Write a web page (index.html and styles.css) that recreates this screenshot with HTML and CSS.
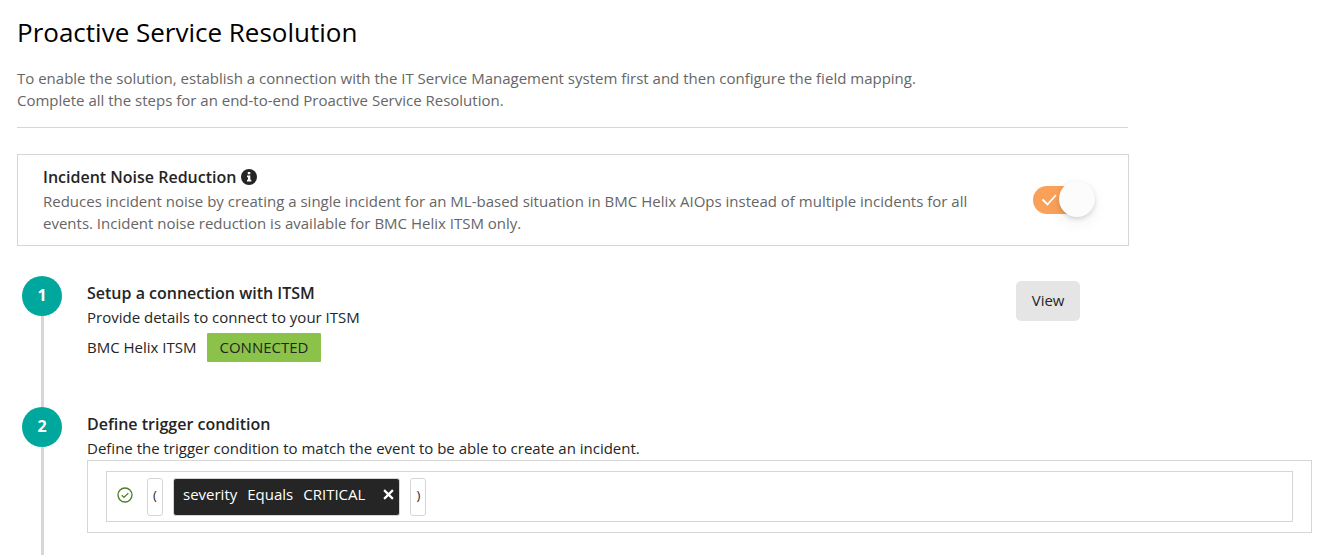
FILE: index.html
```html
<!DOCTYPE html>
<html lang="en">
<head>
    <meta charset="UTF-8">
    <meta name="viewport" content="width=device-width, initial-scale=1.0">
    <title>Proactive Service Resolution</title>
    <link rel="stylesheet" href="styles.css">
</head>
<body>
    <header class="page-header">
        <h1>Proactive Service Resolution</h1>
        <p>To enable the solution, establish a connection with the IT Service Management system first and then configure the field mapping.<br>
        Complete all the steps for an end-to-end Proactive Service Resolution.</p>
    </header>

    <section class="noise-box">
        <div class="noise-text">
            <h2>
                <label for="noise-toggle">Incident Noise Reduction</label>
                <svg class="info-icon" viewBox="0 0 16 16" aria-hidden="true">
                    <circle cx="8" cy="8" r="8" fill="#252525"/>
                    <path d="M6.8 3h2.5v2.2H6.8zM6 6.4h3.3v4.3h1v1.9H6v-1.9h1V8.2H6z" fill="#fff"/>
                </svg>
            </h2>
            <p>Reduces incident noise by creating a single incident for an ML-based situation in BMC Helix AIOps instead of multiple incidents for all events. Incident noise reduction is available for BMC Helix ITSM only.</p>
        </div>
        <div class="toggle">
            <input type="checkbox" id="noise-toggle" checked>
            <svg class="toggle-check" viewBox="0 0 16 12" aria-hidden="true">
                <path d="M1.5 5.5l5 5L15 1" fill="none" stroke="#fff" stroke-width="1.8"/>
            </svg>
            <span class="toggle-knob"></span>
        </div>
    </section>

    <ol class="steps">
        <li class="step">
            <div class="step-marker"><span class="step-number">1</span></div>
            <div class="step-body">
                <div class="step-main">
                    <div class="step-info">
                        <h2>Setup a connection with ITSM</h2>
                        <p>Provide details to connect to your ITSM</p>
                        <div class="connection">
                            <span>BMC Helix ITSM</span>
                            <span class="badge">CONNECTED</span>
                        </div>
                    </div>
                    <button type="button" class="view-button">View</button>
                </div>
            </div>
        </li>
        <li class="step">
            <div class="step-marker"><span class="step-number">2</span></div>
            <div class="step-body">
                <h2>Define trigger condition</h2>
                <p>Define the trigger condition to match the event to be able to create an incident.</p>
                <div class="condition-box">
                    <div class="condition">
                        <svg class="valid-icon" viewBox="0 0 16 16" aria-hidden="true">
                            <circle cx="8" cy="8" r="7" fill="none" stroke="#4f7d22" stroke-width="1.3"/>
                            <path d="M4.8 8.2l2.2 2.2 4.3-4.3" fill="none" stroke="#4f7d22" stroke-width="1.3"/>
                        </svg>
                        <span class="paren">(</span>
                        <span class="chip">
                            <span>severity</span>
                            <span>Equals</span>
                            <span>CRITICAL</span>
                            <button type="button" class="chip-remove" aria-label="Remove condition">
                                <svg viewBox="0 0 10 10" aria-hidden="true">
                                    <path d="M1 1l8 8M9 1L1 9" stroke="#fff" stroke-width="2"/>
                                </svg>
                            </button>
                        </span>
                        <span class="paren">)</span>
                    </div>
                </div>
            </div>
        </li>
    </ol>
</body>
</html>
```
FILE: styles.css
```css
* {
    box-sizing: border-box;
}
body {
    margin: 0;
    padding: 14px 12px 0 17px;
    font-family: "Open Sans", sans-serif;
    font-size: 15px;
    line-height: 22px;
    color: #252525;
    background: #fff;
}
h1, h2, p {
    margin: 0;
}
h1 {
    font-size: 26px;
    font-weight: 400;
    line-height: 36px;
    margin-bottom: 17px;
    color: #000;
}
h2 {
    font-size: 16px;
    font-weight: 600;
    line-height: 24px;
    margin-bottom: 1px;
}
.page-header {
    width: 85.8%;
    padding-bottom: 16px;
    border-bottom: 1px solid #d6d6d6;
    color: #666;
}
.noise-box {
    display: flex;
    align-items: center;
    justify-content: space-between;
    width: 85.9%;
    margin-top: 26px;
    padding: 10px 33px 11px 25px;
    border: 1px solid #d6d6d6;
}
.noise-text {
    flex: 1;
    padding-right: 50px;
}
.noise-text h2 {
    display: flex;
    align-items: center;
    gap: 5px;
}
.noise-text p {
    color: #666;
}
.info-icon {
    width: 16px;
    height: 16px;
}
.toggle {
    position: relative;
    flex: none;
    width: 62px;
    height: 28px;
}
.toggle input {
    display: block;
    appearance: none;
    width: 56px;
    height: 28px;
    margin: 0;
    border-radius: 14px;
    background: #ccc;
    cursor: pointer;
}
.toggle input:checked {
    background: #f9a159;
}
.toggle-check {
    position: absolute;
    top: 8px;
    left: 8px;
    width: 16px;
    height: 12px;
    pointer-events: none;
}
.toggle-knob {
    position: absolute;
    top: -5px;
    right: 0;
    width: 36px;
    height: 36px;
    border-radius: 50%;
    background: #fcfcfc;
    box-shadow: 0 2px 4px rgba(0, 0, 0, 0.14), 0 6px 16px rgba(0, 0, 0, 0.06);
    pointer-events: none;
}
.steps {
    list-style: none;
    margin: 30px 0 0;
    padding: 0 0 0 5px;
}
.step {
    display: flex;
    gap: 25px;
    min-height: 131px;
}
/* circle with the line running down to the next step */
.step-marker {
    display: flex;
    flex-direction: column;
    align-items: center;
    flex: none;
    width: 40px;
}
.step-marker::after {
    content: "";
    flex: 1;
    width: 3px;
    background: #d6d6d6;
}
.step-number {
    width: 40px;
    height: 40px;
    border-radius: 50%;
    background: #00a79d;
    color: #fff;
    font-size: 16px;
    font-weight: 700;
    line-height: 39px;
    text-align: center;
}
.step-body {
    flex: 1;
    padding-top: 5px;
}
.step:last-child .step-body {
    padding-bottom: 22px;
}
.step-main {
    display: flex;
    align-items: flex-start;
    justify-content: space-between;
    width: 81.1%;
}
.connection {
    display: flex;
    align-items: baseline;
    gap: 10px;
    margin-top: 5px;
}
.badge {
    padding: 3px 13px 4px;
    border-radius: 1px;
    background: #8bc34a;
}
.view-button {
    padding: 8px 16px 10px;
    border: none;
    border-radius: 5px;
    background: #e5e5e5;
    color: #252525;
    font: inherit;
    cursor: pointer;
}
.view-button:hover {
    background: #d6d6d6;
}
.condition-box {
    margin-top: 1px;
    padding: 10px 18px;
    border: 1px solid #d6d6d6;
}
.condition {
    display: flex;
    align-items: center;
    padding: 6px 10px 5px;
    border: 1px solid #d6d6d6;
}
.valid-icon {
    width: 16px;
    height: 16px;
    margin: 0 14px 4px 0;
}
.paren {
    width: 16px;
    height: 38px;
    border: 1px solid #d6d6d6;
    border-radius: 3px;
    font-size: 13px;
    line-height: 32px;
    text-align: center;
}
.chip {
    display: flex;
    align-items: center;
    gap: 10px;
    height: 38px;
    margin: 0 10px;
    padding: 0 5px 6px 9px;
    border: 1px solid #d6d6d6;
    border-radius: 3px;
    background: #252525;
    color: #fff;
}
.chip-remove {
    display: flex;
    margin-left: 8px;
    padding: 0;
    border: none;
    background: none;
    cursor: pointer;
}
.chip-remove svg {
    width: 11px;
    height: 11px;
}
```
